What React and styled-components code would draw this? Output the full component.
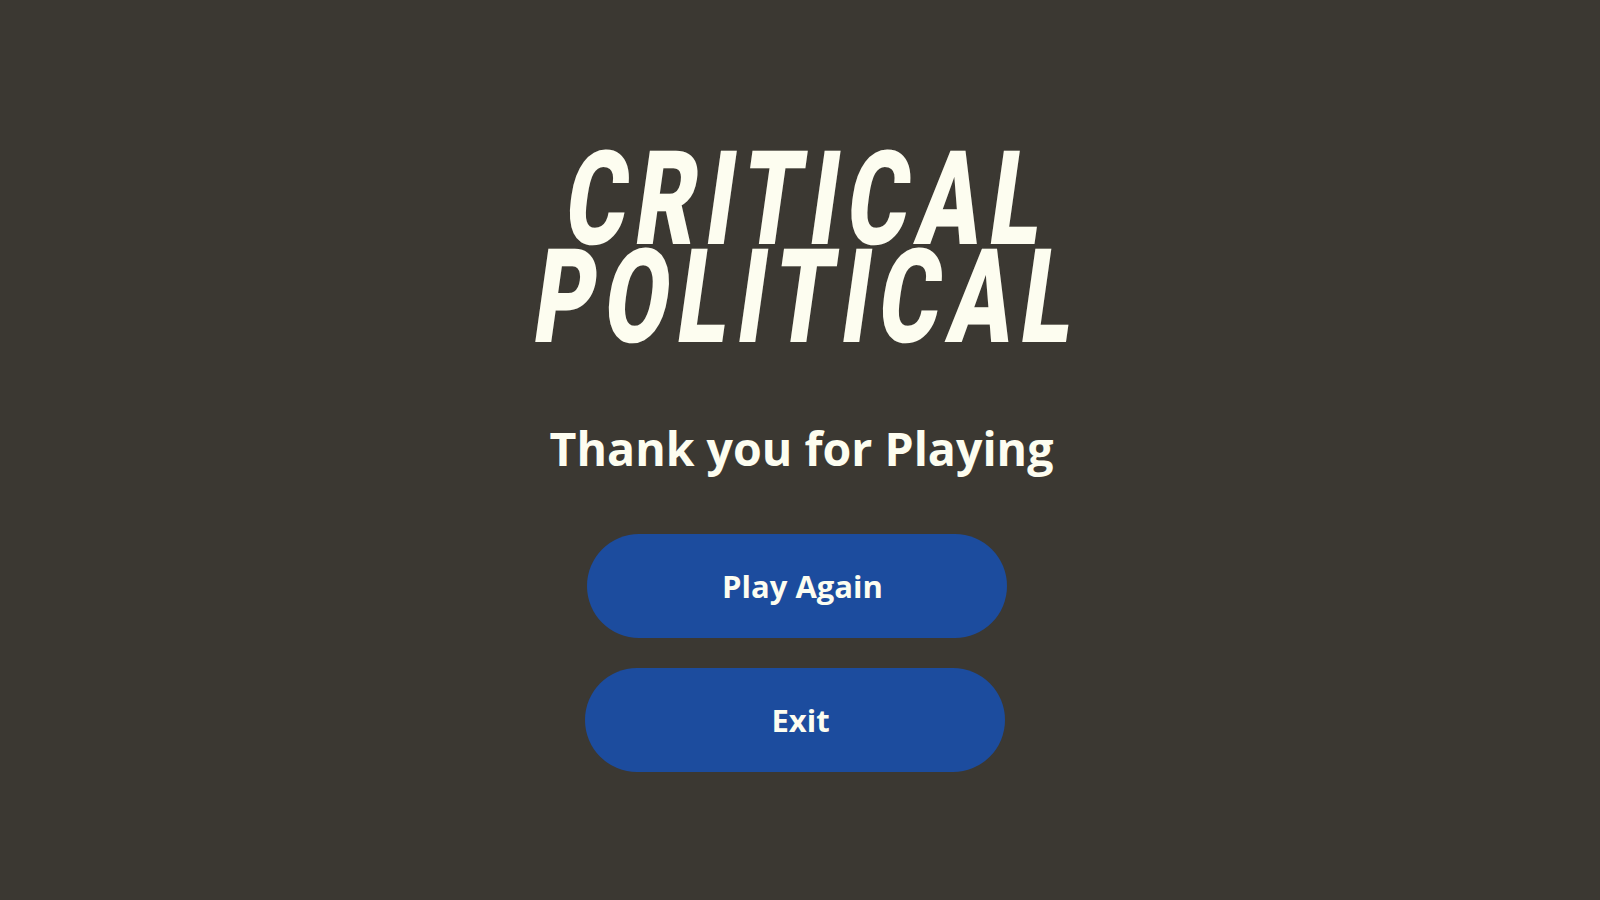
import styled, { createGlobalStyle } from 'styled-components';

const GlobalStyle = createGlobalStyle`
	html, body {
		margin: 0;
		padding: 0;
		background-color: #3b3832;
	}
`;

const Container = styled.div`
	width: 100vw;
	height: 100vh;
	display: flex;
	flex-direction: column;
	align-items: center;
	background-color: #3b3832;
	overflow: hidden;
`;

const Title = styled.h1`
	margin: 150px 0 0 0;
	display: flex;
	flex-direction: column;
	align-items: center;
	font-family: 'Roboto', 'Liberation Sans', sans-serif;
	font-weight: 900;
	font-size: 131px;
	line-height: 98px;
	color: #fdfdf0;
`;

const TitleLine = styled.span`
	display: block;
	letter-spacing: 13px;
	margin-right: -13px;
	transform: translateX(3px) skewX(-8deg) scaleX(0.71);
`;

const Subtitle = styled.h2`
	margin: 70px 0 0 3px;
	font-family: 'Open Sans', 'Liberation Sans', sans-serif;
	font-weight: 700;
	font-size: 46.5px;
	color: #fdfdf0;
`;

const Buttons = styled.div`
	margin-top: 54px;
	display: flex;
	flex-direction: column;
	align-items: center;
	gap: 30px;
`;

const Button = styled.button`
	width: 420px;
	height: 104px;
	padding: 0 0 0 11px;
	border: none;
	border-radius: 52px;
	background-color: #1c4c9e;
	color: #fdfdf0;
	font-family: 'Open Sans', 'Liberation Sans', sans-serif;
	font-weight: 700;
	font-size: 31px;
	cursor: pointer;
	transform: translateX(${(p) => p.offset || '0px'});
`;

const App = () => {
	return (
		<Container>
			<GlobalStyle />
			<Title>
				<TitleLine>CRITICAL</TitleLine>
				<TitleLine>POLITICAL</TitleLine>
			</Title>
			<Subtitle>Thank you for Playing</Subtitle>
			<Buttons>
				<Button offset="-3px">Play Again</Button>
				<Button offset="-5px">Exit</Button>
			</Buttons>
		</Container>
	);
};

export default App;
